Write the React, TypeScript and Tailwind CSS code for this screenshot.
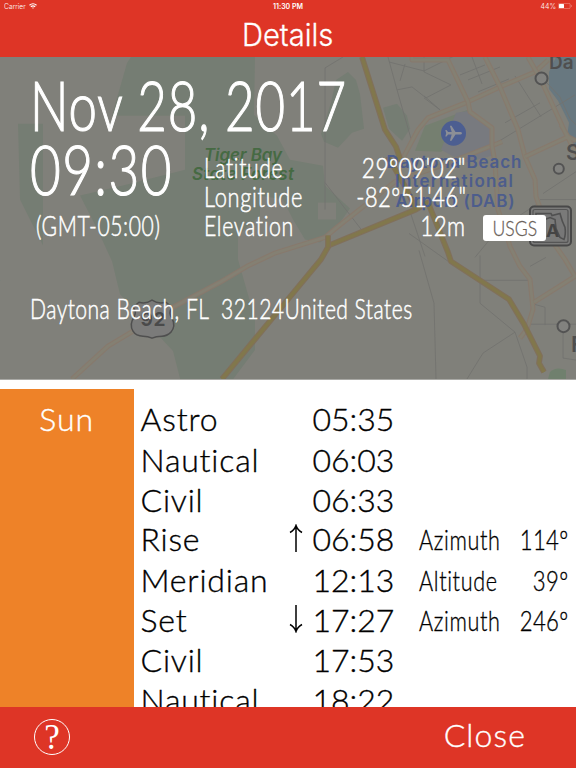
import type { ReactNode } from 'react';
import { clsx } from 'clsx';

interface TwilightRow {
  label: string;
  time: string;
  height: string;
  arrow?: 'up' | 'down';
  detail?: string;
  value?: string;
}

const sunRows: TwilightRow[] = [
  { label: 'Astro', time: '05:35', height: 'h-[41px]' },
  { label: 'Nautical', time: '06:03', height: 'h-[40px]' },
  { label: 'Civil', time: '06:33', height: 'h-[39px]' },
  { label: 'Rise', time: '06:58', height: 'h-[41px]', arrow: 'up', detail: 'Azimuth', value: '114º' },
  { label: 'Meridian', time: '12:13', height: 'h-[40px]', detail: 'Altitude', value: '39º' },
  { label: 'Set', time: '17:27', height: 'h-[40px]', arrow: 'down', detail: 'Azimuth', value: '246º' },
  { label: 'Civil', time: '17:53', height: 'h-[40px]' },
  { label: 'Nautical', time: '18:22', height: 'h-[40px]' },
];

const minorRoads = [
  'M325 210V68l18-11M325 183l37 48M388 57l9 33 14 49M397 90l15-3 14 11 25-13-27-13V57M405 64l-5 17M424 98l16 12',
  'M389 62l35 9 30-15M468 80l32-13M478 92l31-13M472 57l10 27M460 75l25-10M440 110l-16-14',
  'M505 123l35-20M515 76l26 41M485 150l90-55M425 257l-15-45M409 234l42 30M419 251l15 53 2 76',
  'M480 256v48l35 29 12 35v12M484 281h44M515 333l-32 21-16 26M530 325h46M534 305l11 3v18M563 333v26l13 2',
  'M530 267l16-9M475 258l23-28 40-26M540 200h36M576 172l-33 22M546 82l14 15 10 22 6 6',
];

const beigeRoads = [
  'M72 380l36-33 25-15 40-24 47-25 27-16 27-13 51-16 13-11 57-45 49-17 58-23',
  'M401 162l17-32 10-12 40-16 32-15 35-15 13-12',
  'M412 57v3h36l20 42 2 10 22 16v18l3 17 3 47 8 23 4 14 10 20 10 13 3 30-6 20-7 9',
  'M485 57l15 30 18 43 7 27 10 23 1 17 15 43 14 20 10 17-41 26',
  'M528 57l13 23 23 50 12 24M525 157l43-20M561 125l7 12 8 4',
];

const yellowRoads = [
  'M362 57l23 73 11 17 5 15',
  'M222 380l66-80 33-40 8-14 87-36 12-7 20 50 3 9 58 38 15 25 16 32-1 7 5 9',
  'M328 248v-12M388 157l16 28 12 24',
];

const Road = ({ d, width, edge, fill }: { d: string; width: number; edge: string; fill: string }) => (
  <g fill="none" strokeLinejoin="round">
    <path d={d} stroke={edge} strokeWidth={width + 2.2} />
    <path d={d} stroke={fill} strokeWidth={width} />
  </g>
);

const MapBackdrop = () => (
  <svg viewBox="0 57 576 323" className="absolute inset-0 h-full w-full font-['Inter'] [-webkit-text-stroke:0]" preserveAspectRatio="none">
    <rect y="57" width="576" height="323" fill="#80807a" />
    <g fill="#757d73">
      <path d="M127 63l4-6h124l-1 58 23 21 13 24 33 6 2 20 25 23-17 24-13 10-15-3-12-20-10-20-23-4v20l-22 20v24l17 60v31l-33 44h-38l-11-43-53-57-8-33-15-33-17-33 47-11 58-15V116h-73z" />
      <path d="M10 124h33v122l-23-46-2-76z" />
      <path d="M331 103l5-23 12-8 8 8 4 14 4 35-12 4-14 15-14-6-3-8 4-12z" />
      <path d="M383 108l14-4 10 12 3 13-8 12-13-12z" />
    </g>
    <rect x="318" y="203" width="18" height="17" fill="#80807a" />
    <path d="M415 151l10-25 43-16 4 24-31 18z" fill="#757f70" />
    <path d="M441 150l15-37 14-2 20 18 2 27-27 7z" fill="#787a7f" />
    <path d="M549 72l7-15h20v93l-9-13 2-14-11-22-9-12z" fill="#687880" />
    <path d="M550 373q6-6 16-2v9h-18z" fill="#70806e" />
    <path d={minorRoads.join('')} fill="none" stroke="#73736f" strokeWidth="0.9" />
    {beigeRoads.map((d) => (
      <Road key={d} d={d} width={2.8} edge="#87796d" fill="#848073" />
    ))}
    {yellowRoads.map((d) => (
      <Road key={d} d={d} width={3.6} edge="#80705c" fill="#81774c" />
    ))}

    <g fill="#466a43" fontSize="17" fontStyle="italic" fontWeight="600">
      <text x="204" y="161" textLength="78">Tiger Bay</text>
      <text x="192" y="180" textLength="102">State Forest</text>
    </g>

    <circle cx="453.5" cy="133.5" r="12.5" fill="#4c5e91" />
    <path
      transform="translate(453.5 133.5)"
      d="M8.5 0c0-.8-1-1.3-2.2-1.3H2L-2-7.5h-1.600l1.800 6.200h-3.600L-7-3.300h-1.200L-7.300 0l-.9 3.300H-7l1.600-2h3.600l-1.800 6.200H-2l4-6.200h4.300C7.500 1.300 8.500.8 8.500 0z"
      fill="#8c8f96"
    />
    <g fill="#4d5d8c" fontSize="17" fontWeight="600" textAnchor="middle">
      <text x="454" y="168" textLength="135">Daytona Beach</text>
      <text x="454" y="187.500" textLength="118">International</text>
      <text x="455" y="207" textLength="119">Airport (DAB)</text>
    </g>

    <g fill="#82827f" stroke="#535353" strokeWidth="2">
      <circle cx="541.5" cy="78.500" r="6" />
      <circle cx="558.800" cy="169" r="5" />
      <circle cx="563.500" cy="327" r="6" />
    </g>
    <g fill="#4f4f4f" fontSize="19" fontWeight="600">
      <text x="549" y="69">Da</text>
      <text x="566" y="160" fontSize="21">S</text>
      <text x="571" y="353" fontSize="22">F</text>
      <text x="-7" y="284" fontSize="13">s</text>
    </g>

    <path
      d="M139 303q7 2 13-2 6 4 14 2l6 5q-4 6 0 11 4 8-1 14-4 4-9 4-6 0-10 2-4-2-9-2-7 0-10-5-4-7 1-14 3-6-1-10z"
      fill="#7b7b7a"
      stroke="#4f4f4f"
      strokeWidth="1.500"
    />
    <text x="153" y="326.500" textAnchor="middle" fontSize="19" fontWeight="700" textLength="25" fill="#4a4a4a">92</text>

    <rect x="530" y="207" width="41" height="39" rx="4" fill="#7a7a79" stroke="#484848" strokeWidth="2" />
    <rect x="533" y="210" width="35" height="33" rx="2" fill="none" stroke="#555" strokeWidth="1.200" />
    <path d="M536 214h15l1 2 8-2q2 8 5 14 1 7-1 12l-4-2-4-9-1-9-5-2-5 2-9-3z" fill="#777" stroke="#505050" strokeWidth="1.600" />
    <text x="546" y="238" fontSize="18" fontWeight="700" fill="#444">A</text>
  </svg>
);

// Horizontally squeezed text, the anchored edge stays where the layout puts it
const Condensed = ({ className, children }: { className?: string; children: ReactNode }) => (
  <span className={clsx('block w-max leading-none whitespace-pre', className)}>{children}</span>
);

const StatusBar = () => (
  <div className="grid h-3 grid-cols-3 items-center px-1 font-['Inter'] text-[7px] leading-none text-white">
    <div className="flex items-center gap-[3px]">
      <span className="origin-left scale-x-[.97]">Carrier</span>
      <svg viewBox="0 0 16 12" className="h-[6px] w-[8px]" fill="none" stroke="white" strokeWidth="2.4">
        <path d="M1 4.5q7-6 14 0M3.7 7.4q4.3-3.6 8.6 0" />
        <path d="M6 9.6q2-1.6 4 0L8 11.6z" fill="white" stroke="none" />
      </svg>
    </div>
    <span className="text-center text-[7px] font-semibold">11:30 PM</span>
    <div className="flex items-center justify-end gap-[2px]">
      <span>44%</span>
      <svg viewBox="0 0 28 12" className="h-[6px] w-[14px]">
        <rect x=".7" y=".7" width="23.6" height="10.6" rx="2.5" fill="none" stroke="#f09a92" strokeWidth="1.2" />
        <rect x="2" y="2" width="10" height="8" rx="1" fill="white" />
        <path d="M26 4v4q1.500-.6 1.500-2T26 4z" fill="#f09a92" />
      </svg>
    </div>
  </div>
);

const Arrow = ({ direction }: { direction: 'up' | 'down' }) => (
  <svg
    viewBox="0 0 14 28"
    className={clsx('h-7 w-[14px]', direction === 'down' && 'rotate-180')}
    fill="none"
    stroke="black"
    strokeWidth="1.500"
  >
    <path d="M7 28V1.500M1 8.500q4.500-2.500 6-7 1.500 4.500 6 7" />
  </svg>
);

const Summary = () => (
  <section className="relative h-[323px] shrink-0 overflow-hidden border-b border-[#a9a9a5] text-white [-webkit-text-stroke:.5px]">
    <MapBackdrop />
    <div className="relative pt-[14px]">
      <h2 className="h-[64px] pl-[30px] [-webkit-text-stroke:1.2px]">
        <Condensed className="origin-left scale-x-[.75] text-[68px] tracking-[1.2px]">Nov 28, 2017</Condensed>
      </h2>
      <div className="flex h-[160px] items-start">
        <div className="w-[204px]">
          <div className="h-[77px] pl-[30px] [-webkit-text-stroke:1.2px]">
            <Condensed className="origin-left scale-x-[.78] text-[68px] tracking-[1.8px]">09:30</Condensed>
          </div>
          <div className="pl-[36px]">
            <Condensed className="origin-left scale-x-[.78] text-[27px] tracking-[.8px]">(GMT-05:00)</Condensed>
          </div>
        </div>
        <div className="mt-[19px] flex w-[262px] justify-between text-[27px]">
          <div className="flex w-[130px] flex-col gap-[2px]">
            <Condensed className="origin-left scale-x-[.78] tracking-[.8px]">Latitude</Condensed>
            <Condensed className="origin-left scale-x-[.81] tracking-[.8px]">Longitude</Condensed>
            <Condensed className="origin-left scale-x-[.79] tracking-[.8px]">Elevation</Condensed>
          </div>
          <div className="flex flex-col items-end gap-[2px]">
            <Condensed className="origin-right scale-x-[.84] tracking-[.5px]">29º09'02"</Condensed>
            <Condensed className="origin-right scale-x-[.82] tracking-[.5px]">-82º51'46"</Condensed>
            <Condensed className="origin-right scale-x-[.83] tracking-[.5px]">12m</Condensed>
          </div>
        </div>
        <button className="mt-[80px] ml-[17px] flex h-[26px] w-[63px] items-center justify-center rounded-[3px] bg-white text-[#6b625a] [-webkit-text-stroke:.3px]">
          <Condensed className="scale-x-[.8] text-[22px]">USGS</Condensed>
        </button>
      </div>
      <div className="pl-[29.5px]">
        <Condensed className="origin-left scale-x-[.78] text-[27px] tracking-[.6px]">
          {'Daytona Beach, FL  32124United States'}
        </Condensed>
      </div>
    </div>
  </section>
);

const SunTable = () => (
  <section className="mt-[9px] flex min-h-0 flex-1 overflow-hidden [-webkit-text-stroke:.35px]">
    <div className="w-[133.5px] shrink-0 bg-[#ee8228] pt-[14px] text-center text-[32px] leading-none tracking-[1px] text-white">
      Sun
    </div>
    <div className="flex-1 pt-[14px] text-[32px] leading-none text-black">
      {sunRows.map((row, i) => (
        <div key={i} className={clsx('flex shrink-0 items-start', row.height)}>
          <div className="w-[155px] pl-[7px] tracking-[.8px]">{row.label}</div>
          <div className="mt-px w-[14px]">{row.arrow && <Arrow direction={row.arrow} />}</div>
          <div className="w-[93px] pl-[10px]">{row.time}</div>
          {row.detail && (
            <div className="flex flex-1 justify-between pt-[3px] pl-[23px] pr-[8px] text-[27px]">
              <div className="w-[84px]">
                <Condensed className="origin-left scale-x-[.8] tracking-[.8px]">{row.detail}</Condensed>
              </div>
              <Condensed className="origin-right scale-x-[.82] tracking-[.4px]">{row.value}</Condensed>
            </div>
          )}
        </div>
      ))}
    </div>
  </section>
);

export default function App() {
  return (
    <div className="flex h-screen w-full flex-col overflow-hidden bg-white font-['Lato',sans-serif] font-light [font-variant-ligatures:none]">
      <header className="h-[57px] shrink-0 bg-[#de3526]">
        <StatusBar />
        <h1 className="pt-[7px] text-center font-['Inter'] text-[31px] leading-none font-light text-white [-webkit-text-stroke:.3px]">
          <span className="inline-block scale-x-[.94]">Details</span>
        </h1>
      </header>
      <Summary />
      <SunTable />
      <footer className="flex h-[61px] shrink-0 items-start justify-between bg-[#de3526] pr-[50px] pl-[34px] text-white">
        <button className="mt-[12px] flex size-[36px] items-center justify-center rounded-full border-[1.5px] border-white font-['Liberation_Serif'] text-[35px] leading-none font-normal">
          ?
        </button>
        <button className="mt-[12px] text-[32px] leading-none tracking-[1.1px] [-webkit-text-stroke:.35px]">Close</button>
      </footer>
    </div>
  );
}
